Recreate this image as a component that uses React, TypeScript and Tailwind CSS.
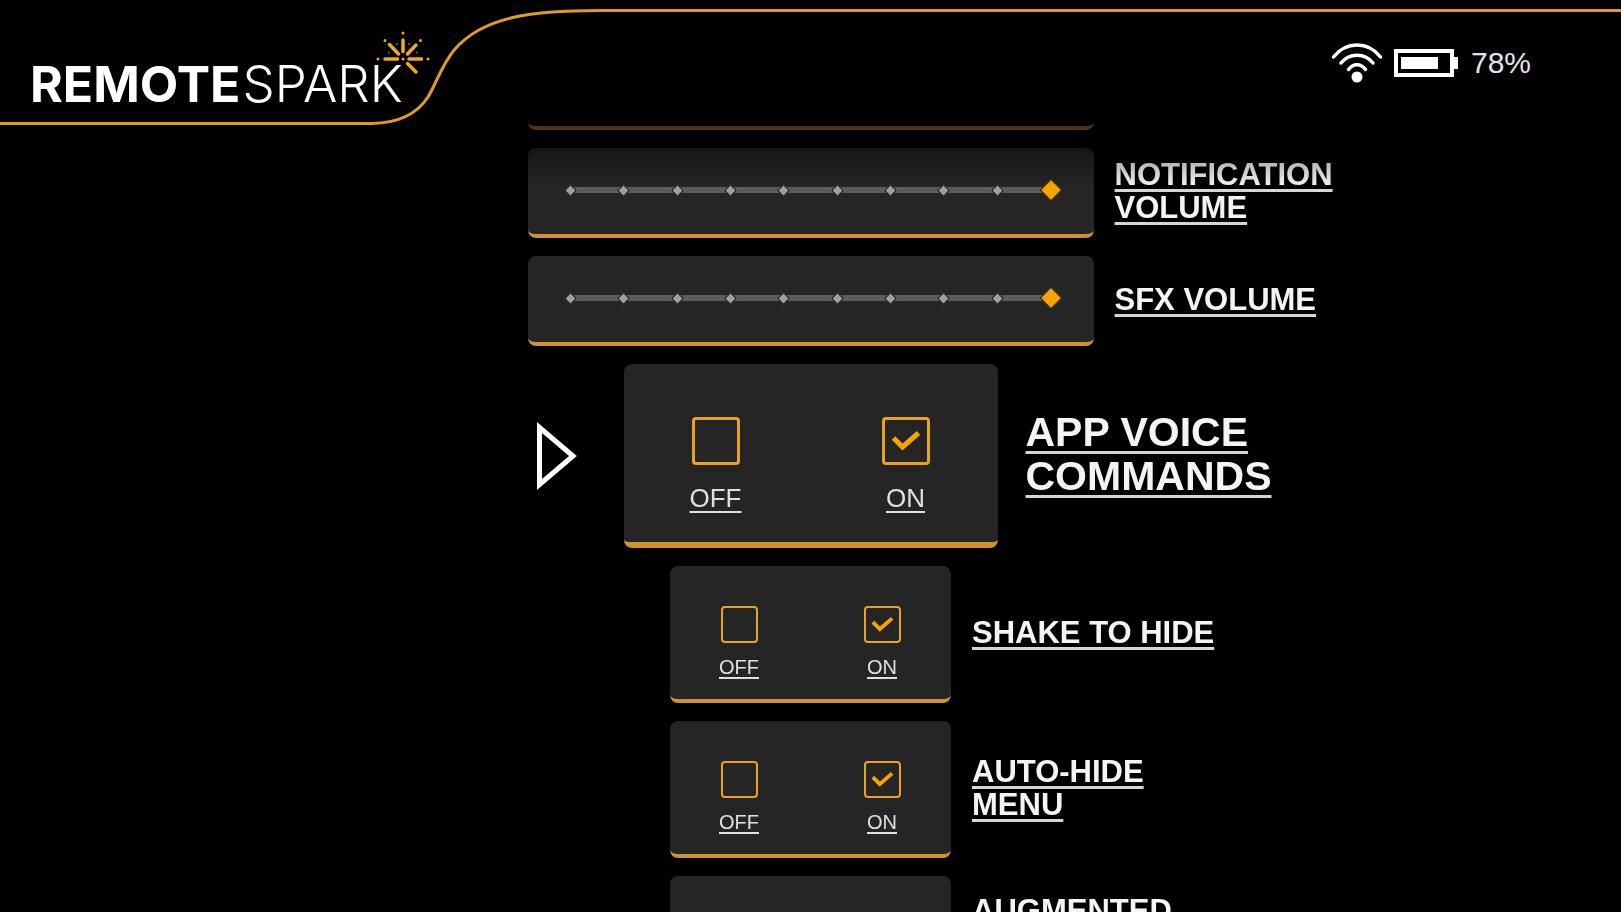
import { useId, useState } from "react";
import clsx from "clsx";

const STEPS = 10;

function Logo() {
  return (
    <h1 className="flex items-baseline font-['Inter',sans-serif] leading-none text-white">
      <span className="text-[50px] font-bold">REMOTE</span>
      <span className="ml-0.5 text-[51px] font-light">SPARK</span>
    </h1>
  );
}

function Spark() {
  return (
    <svg
      className="absolute left-[376px] top-[31px] h-11 w-[54px]"
      viewBox="0 0 54 44"
      fill="none"
      stroke="#eba92a"
      strokeWidth="3.500"
      strokeLinecap="round"
      aria-hidden="true"
    >
      <path d="M27 9v11.500M13.500 13.500l9 9.500M40 14l-8.500 9M9 28h12.500M33 28h12.500M31.500 32.500l8.500 8.500" />
      <path
        d="M27 2v.01M9 9.500v.01M44.500 9.500v.01M2 28v.01M52 28v.01M27 28v.01"
        strokeWidth="3"
      />
      <path d="M21 13v.01M33 13v.01M13 21.500v.01M41 21.500v.01" strokeWidth="2" opacity="0.6" />
    </svg>
  );
}

function WifiIcon() {
  return (
    <svg
      className="h-10 w-[52px]"
      viewBox="0 0 52 40"
      fill="none"
      stroke="white"
      strokeWidth="3.500"
      strokeLinecap="round"
      aria-hidden="true"
    >
      <path d="M2.500 14C15 -2 37 -2 49.500 14" />
      <path d="M10 20C18 9.500 34 9.500 42 20" />
      <path d="M17.500 26.500C22 20 30 20 34.500 26.500" />
      <circle cx="26" cy="34" r="5.500" fill="white" stroke="none" />
    </svg>
  );
}

function BatteryIcon() {
  return (
    <svg className="h-7 w-16" viewBox="0 0 64 28" fill="white" aria-hidden="true">
      <rect x="2" y="2" width="56" height="24" fill="none" stroke="white" strokeWidth="4" />
      <rect x="7" y="8" width="37" height="12" />
      <rect x="59" y="8" width="5" height="12" />
    </svg>
  );
}

function Header() {
  return (
    <header className="relative flex h-[122px] shrink-0 items-start justify-between pl-[30px] pr-[90px]">
      {/* Divider line, runs past the right edge on wide screens */}
      <svg
        className="pointer-events-none absolute left-0 top-0 h-[126px] w-full"
        fill="none"
        stroke="#e09b25"
        strokeWidth="3"
        aria-hidden="true"
      >
        <path d="M0 123.500H372C400 123 417 114 428 97C436 84 442 64 455 49C483 17 530 10.500 600 10.500H6000" />
      </svg>
      <div className="pt-[58px]">
        <Logo />
      </div>
      <Spark />
      <div className="flex items-center pt-[43px] font-['Liberation_Sans',Arial,sans-serif]">
        <WifiIcon />
        <div className="ml-[11px]">
          <BatteryIcon />
        </div>
        <span className="ml-[13px] text-[30px] leading-10 text-[#e4e4e4]">78%</span>
      </div>
    </header>
  );
}

interface RowLabelProps {
  id: string;
  text: string;
  active?: boolean;
}

function RowLabel({ id, text, active = false }: RowLabelProps) {
  return (
    <span
      id={id}
      className={clsx(
        "pb-1 font-['Liberation_Sans',Arial,sans-serif] font-bold text-[#f4f4f4] underline decoration-[#d6d6d6] decoration-[3px]",
        active
          ? "ml-7 max-w-[300px] text-[41px] leading-[44px] underline-offset-[5px]"
          : "ml-[21px] max-w-[250px] text-[31px] leading-[33px] underline-offset-4"
      )}
    >
      {text}
    </span>
  );
}

function SliderRow({ label }: { label: string }) {
  const id = useId();
  const [value, setValue] = useState(STEPS);

  return (
    <div className="grid grid-cols-[1fr_auto_1fr] items-center">
      <div className="col-start-2 flex h-[90px] w-[566px] items-center rounded-lg border-b-4 border-[#d0922c] bg-[#252525] px-[35px] pb-0.5">
        <div className="relative flex h-6 w-full items-center justify-between">
          <div className="absolute inset-x-2 h-[6px] bg-[#5c5c5c]" />
          {Array.from({ length: STEPS }, (_, i) => (
            <span key={i} className="relative flex w-4 justify-center">
              <span className="size-[9px] rotate-45 border border-[#111111] bg-[#a0a0a0]" />
            </span>
          ))}
          <input
            type="range"
            min={1}
            max={STEPS}
            value={value}
            aria-labelledby={id}
            onChange={(e) => setValue(Number(e.target.value))}
            className="absolute inset-0 m-0 w-full cursor-pointer appearance-none bg-transparent [&::-webkit-slider-thumb]:size-4 [&::-webkit-slider-thumb]:rotate-45 [&::-webkit-slider-thumb]:appearance-none [&::-webkit-slider-thumb]:border [&::-webkit-slider-thumb]:border-[#111111] [&::-webkit-slider-thumb]:bg-[#f7a400]"
          />
        </div>
      </div>
      <RowLabel id={id} text={label} />
    </div>
  );
}

interface ToggleRowProps {
  label: string;
  active?: boolean;
}

function ToggleRow({ label, active = false }: ToggleRowProps) {
  const id = useId();
  const [on, setOn] = useState(true);

  const options = [
    { text: "OFF", value: false },
    { text: "ON", value: true },
  ];

  return (
    <div className="grid grid-cols-[1fr_auto_1fr] items-center">
      {active && (
        <svg
          className="mr-[47px] h-[70px] w-10 justify-self-end"
          viewBox="0 0 40 70"
          fill="none"
          stroke="white"
          strokeWidth="5"
          aria-hidden="true"
        >
          <path d="M2.500 6.500V63.500L36 35Z" />
        </svg>
      )}
      <div
        role="radiogroup"
        aria-labelledby={id}
        className={clsx(
          "col-start-2 flex items-start justify-between rounded-lg border-[#d0922c] bg-[#252525]",
          active
            ? "h-[184px] w-[374px] border-b-[6px] px-[66px] pt-[53px]"
            : "h-[137px] w-[281px] border-b-4 px-[49px] pt-10"
        )}
      >
        {options.map((option) => (
          <label
            key={option.text}
            className={clsx(
              "flex cursor-pointer flex-col items-center font-['Liberation_Sans',Arial,sans-serif] text-[#e0e0e0] underline decoration-2",
              active
                ? "w-[52px] gap-[18px] text-[26px] leading-[30px] underline-offset-4"
                : "w-10 gap-3 text-[20px] leading-6 underline-offset-[3px]"
            )}
          >
            <span className="relative flex">
              <input
                type="radio"
                name={id}
                checked={on === option.value}
                onChange={() => setOn(option.value)}
                className={clsx(
                  "cursor-pointer appearance-none rounded border-[#eda21f]",
                  active ? "size-12 border-[3px]" : "size-[37px] border-2"
                )}
              />
              {on === option.value && (
                <svg
                  className="pointer-events-none absolute inset-0 size-full"
                  viewBox="0 0 48 48"
                  fill="none"
                  stroke="#f7a400"
                  strokeWidth="5"
                  aria-hidden="true"
                >
                  <path d="M11.500 21L20.500 30L36.500 16" />
                </svg>
              )}
            </span>
            {option.text}
          </label>
        ))}
      </div>
      <RowLabel id={id} text={label} active={active} />
    </div>
  );
}

export default function App() {
  return (
    <div className="flex h-screen flex-col overflow-hidden bg-black">
      <Header />
      <main className="flex flex-1 flex-col gap-[18px] overflow-hidden [mask-image:linear-gradient(to_bottom,rgba(0,0,0,0.3),black_64px)]">
        <div className="h-2 w-[566px] shrink-0 self-center rounded-b-lg border-b-4 border-[#d0922c]" />
        <SliderRow label="NOTIFICATION VOLUME" />
        <SliderRow label="SFX VOLUME" />
        <ToggleRow label="APP VOICE COMMANDS" active />
        <ToggleRow label="SHAKE TO HIDE" />
        <ToggleRow label="AUTO-HIDE MENU" />
        <div className="grid shrink-0 grid-cols-[1fr_auto_1fr] items-start">
          <div className="col-start-2 h-[137px] w-[281px] rounded-lg bg-[#252525]" />
          <div className="pt-[18px]">
            <RowLabel id="augmented" text="AUGMENTED" />
          </div>
        </div>
      </main>
    </div>
  );
}
